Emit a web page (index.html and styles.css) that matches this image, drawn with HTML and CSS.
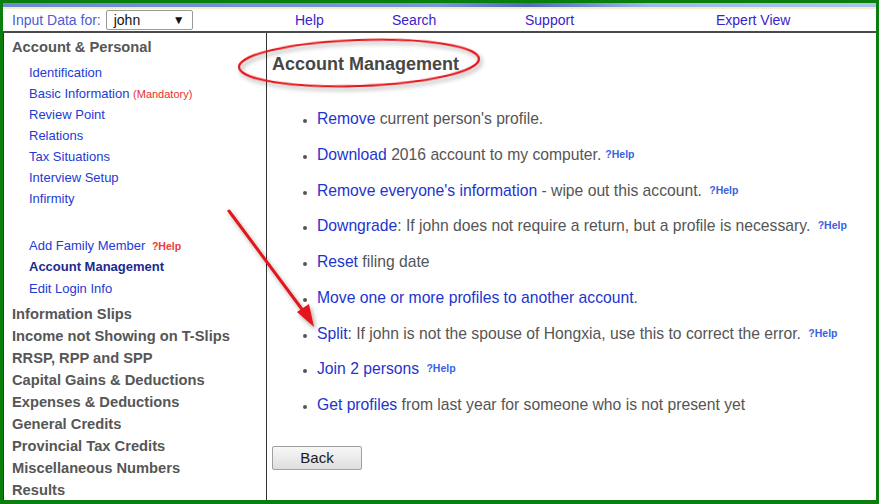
FILE: index.html
```html
<!DOCTYPE html>
<html>
<head>
<meta charset="utf-8">
<title>Account Management</title>
<link rel="stylesheet" href="styles.css">
</head>
<body>
<div class="frame">
  <div class="strip"></div>
  <header class="topbar">
    <div class="who">
      <span class="lbl">Input Data for:</span>
      <span class="select">john<span class="caret">▼</span></span>
    </div>
    <a class="toplink">Help</a>
    <a class="toplink">Search</a>
    <a class="toplink">Support</a>
    <a class="toplink">Expert View</a>
  </header>
  <div class="content">
    <nav class="side">
      <div class="sec">Account &amp; Personal</div>
      <ul class="links">
        <li><a>Identification</a></li>
        <li><a>Basic Information</a> <span class="mand">(Mandatory)</span></li>
        <li><a>Review Point</a></li>
        <li><a>Relations</a></li>
        <li><a>Tax Situations</a></li>
        <li><a>Interview Setup</a></li>
        <li><a>Infirmity</a></li>
      </ul>
      <ul class="links extra">
        <li><a>Add Family Member</a> <span class="redhelp">?Help</span></li>
        <li><a class="active">Account Management</a></li>
        <li><a>Edit Login Info</a></li>
      </ul>
      <div class="sec first-after">Information Slips</div>
      <div class="sec">Income not Showing on T-Slips</div>
      <div class="sec">RRSP, RPP and SPP</div>
      <div class="sec">Capital Gains &amp; Deductions</div>
      <div class="sec">Expenses &amp; Deductions</div>
      <div class="sec">General Credits</div>
      <div class="sec">Provincial Tax Credits</div>
      <div class="sec">Miscellaneous Numbers</div>
      <div class="sec">Results</div>
    </nav>
    <main class="main">
      <h1 class="title">Account Management</h1>
      <ul class="actions">
        <li><a>Remove</a> current person's profile.</li>
        <li><a>Download</a> 2016 account to my computer.<span class="help tight">?Help</span></li>
        <li><a>Remove everyone's information</a> - wipe out this account. <span class="help">?Help</span></li>
        <li><a>Downgrade</a>: If john does not require a return, but a profile is necessary. <span class="help">?Help</span></li>
        <li><a>Reset</a> filing date</li>
        <li><a>Move one or more profiles to another account</a>.</li>
        <li><a>Split</a>: If john is not the spouse of Hongxia, use this to correct the error. <span class="help">?Help</span></li>
        <li><a>Join 2 persons</a> <span class="help">?Help</span></li>
        <li><a>Get profiles</a> from last year for someone who is not present yet</li>
      </ul>
      <button class="back">Back</button>
    </main>
  </div>
  <svg class="overlay" width="879" height="504" viewBox="0 0 879 504">
    <defs>
      <filter id="sh" x="-20%" y="-20%" width="140%" height="160%">
        <feDropShadow dx="2" dy="3" stdDeviation="2" flood-color="#000" flood-opacity="0.35"/>
      </filter>
    </defs>
    <ellipse cx="359" cy="63" rx="120" ry="23" fill="none" stroke="#e3161b" stroke-width="2.2" filter="url(#sh)" transform="rotate(-2 359 63)"/>
    <g filter="url(#sh)">
      <line x1="229" y1="211" x2="307" y2="316" stroke="#e3161b" stroke-width="3" stroke-linecap="round"/>
      <polygon points="314,327 297,312 309,304" fill="#e3161b"/>
    </g>
  </svg>
</div>
</body>
</html>
```

FILE: styles.css
```css
* { box-sizing: border-box; }

html, body {
  margin: 0;
  padding: 0;
  background: #ffffff;
}

body {
  font-family: "Liberation Sans", Arial, sans-serif;
}

.frame {
  position: relative;
  width: 879px;
  height: 504px;
  border-style: solid;
  border-color: #0b7f0b;
  border-width: 3px 3px 4px 3px;
  display: flex;
  flex-direction: column;
  background: #fff;
}

.strip {
  height: 6px;
  flex: none;
  border-bottom: 2px solid #f5eec3;
  background: linear-gradient(90deg, #6b8bd9 0%, #7696dd 50%, #4f6cc2 60%, #6c8ad6 66%, #9fb8ea 74%, #a9c2ee 100%);
}

.topbar {
  height: 24px;
  flex: none;
  display: grid;
  grid-template-columns: 283px 97px 133px 191px auto;
  align-items: center;
  padding-left: 9px;
  font-size: 14px;
  line-height: 22px;
  border-bottom: 2px solid #4a4a4a;
}

.who {
  display: flex;
  align-items: center;
}

.lbl {
  color: #4c5cd2;
}

.select {
  margin-left: 5px;
  width: 87px;
  height: 20px;
  border: 1px solid #9a9a9a;
  border-radius: 2px;
  padding-left: 7px;
  display: flex;
  align-items: center;
  justify-content: space-between;
  line-height: 18px;
  color: #111;
}

.caret {
  font-size: 12px;
  margin-right: 7px;
  color: #111;
}

.toplink {
  color: #3a22c9;
}

.content {
  flex: 1;
  display: flex;
  min-height: 0;
}

.side {
  width: 264px;
  flex: none;
  border-left: 1px solid #333;
  border-right: 1px solid #333;
  padding: 3px 0 0 8px;
}

.sec {
  font-size: 14.7px;
  font-weight: bold;
  color: #565656;
  line-height: 22px;
  height: 22px;
  white-space: nowrap;
}

.links {
  list-style: none;
  margin: 3.5px 0 0 0;
  padding: 0 0 0 17px;
  font-size: 13px;
  line-height: 21px;
}

.links li {
  height: 21px;
}

.links a {
  color: #1e3bd4;
}

.links.extra {
  margin-top: 26px;
  line-height: 21.5px;
}

.links.extra li {
  height: 21.5px;
}

.links .active {
  color: #1b2a8e;
  font-weight: bold;
}

.mand {
  color: #e8302e;
  font-size: 11px;
  line-height: 0;
}

.redhelp {
  color: #ee3a3a;
  font-size: 10.5px;
  font-weight: bold;
  margin-left: 3px;
  line-height: 0;
}

.first-after {
  margin-top: 4px;
}

.main {
  flex: 1;
  padding: 19px 0 0 5px;
  color: #555;
}

.title {
  margin: 0;
  font-size: 18px;
  line-height: 24px;
  font-weight: bold;
  color: #474747;
}

.actions {
  margin: 33px 0 0 0;
  padding: 0 0 0 45px;
  font-size: 15.7px;
  line-height: 20px;
  list-style: disc;
}

.actions li {
  height: 20px;
  margin-bottom: 15.75px;
  white-space: nowrap;
}

.actions li::marker {
  font-size: 12px;
  color: #555;
}

.actions a {
  color: #1d34cf;
}

.help {
  color: #3b5fe0;
  font-size: 10.5px;
  font-weight: bold;
  margin-left: 3px;
  line-height: 0;
  vertical-align: 2px;
}

.help.tight {
  margin-left: 4px;
}

.back {
  margin-top: 15px;
  width: 90px;
  height: 24px;
  font-family: "Liberation Sans", Arial, sans-serif;
  font-size: 15px;
  color: #1a1a1a;
  border: 1px solid #a0a0a0;
  border-radius: 2px;
  background: linear-gradient(#f7f7f7, #dedede);
  padding: 0;
}

.overlay {
  position: absolute;
  left: -3px;
  top: -3px;
  pointer-events: none;
}
```
